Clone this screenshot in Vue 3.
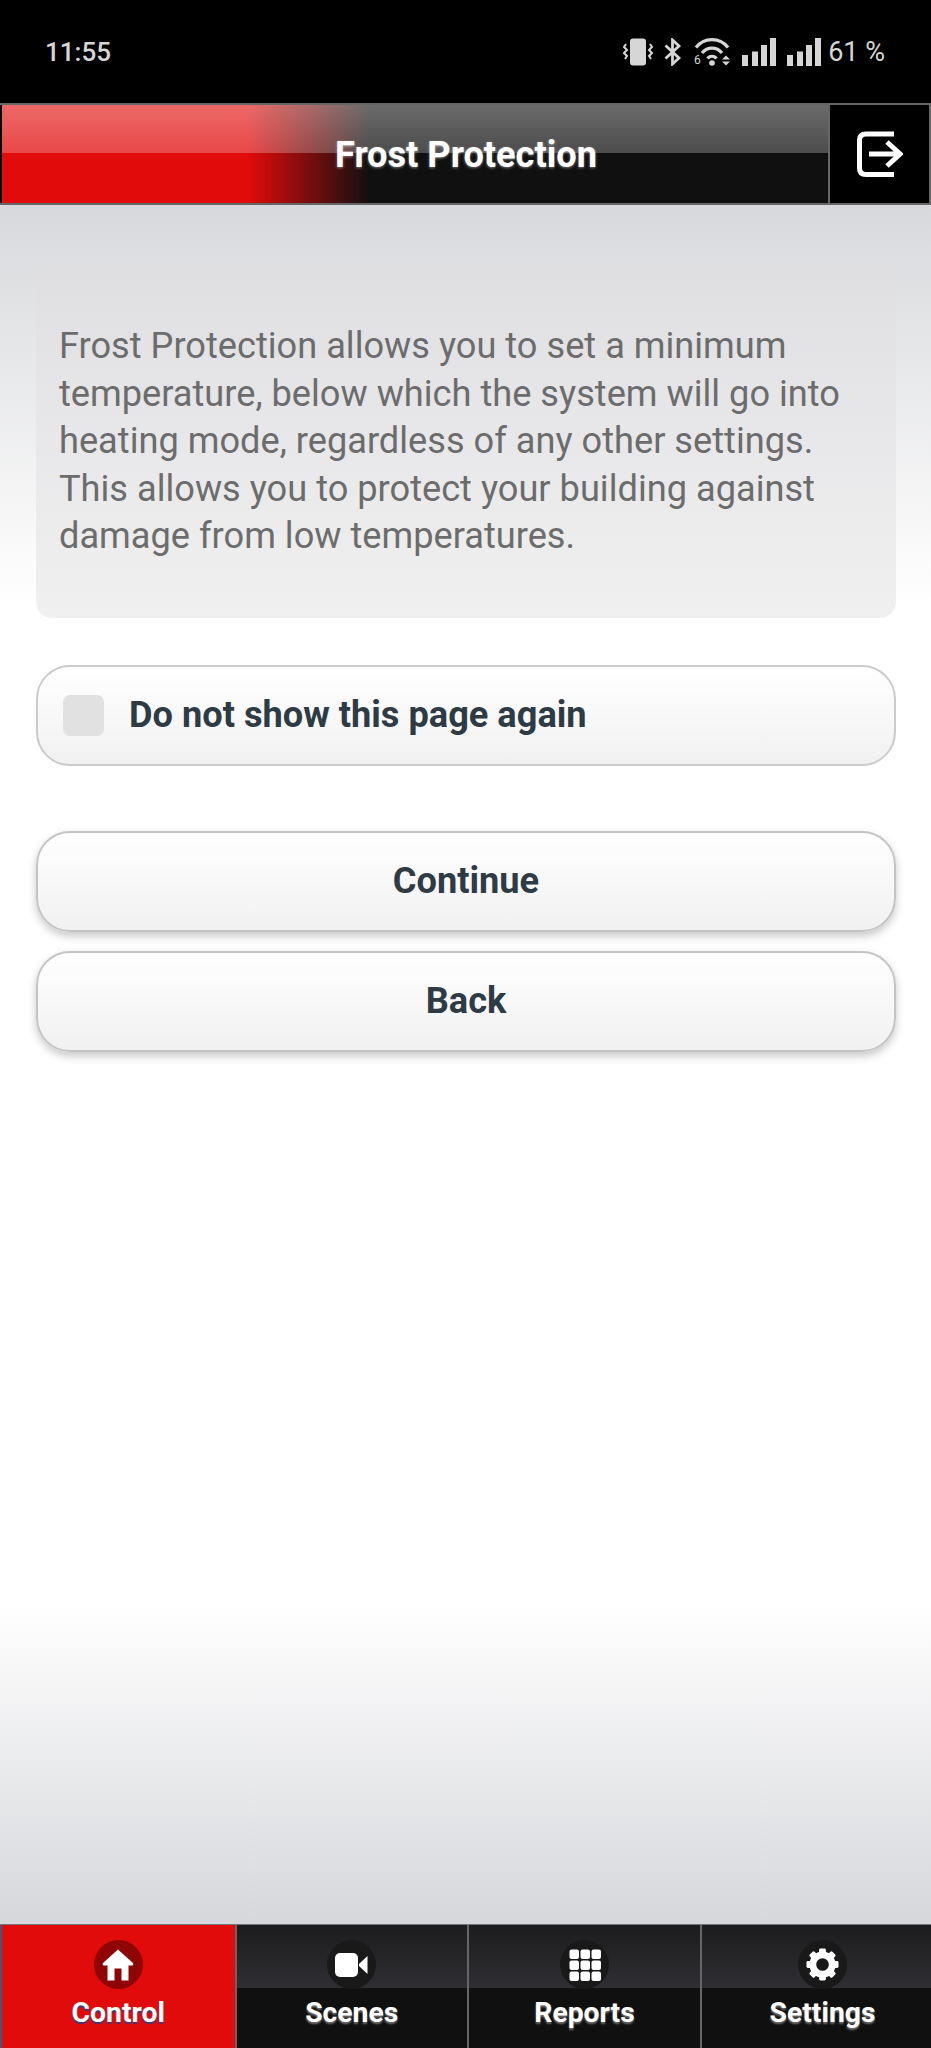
<script setup>
const lines = [
  'Frost Protection allows you to set a minimum',
  'temperature, below which the system will go into',
  'heating mode, regardless of any other settings.',
  'This allows you to protect your building against',
  'damage from low temperatures.'
]

const tabs = [
  { name: 'Control', icon: 'home', active: true },
  { name: 'Scenes', icon: 'video' },
  { name: 'Reports', icon: 'grid' },
  { name: 'Settings', icon: 'gear' }
]

const gridCells = []
for (let r = 0; r < 3; r++) {
  for (let c = 0; c < 3; c++) {
    gridCells.push({ x: 0.5 + c * 11, y: 0.5 + r * 11 })
  }
}

const gearTeeth = [0, 45, 90, 135, 180, 225, 270, 315]
</script>

<template>
  <div class="screen">
    <div class="status">
      <span class="time">11:55</span>
      <div class="status-icons">
        <svg width="30" height="28" viewBox="0 0 30 28">
          <rect x="7" y="0.5" width="16" height="27" rx="3" fill="#d6d6d6" />
          <path d="M3 6 L1 9 L4 12 L1 15 L4 18 L2 21 M27 6 L29 9 L26 12 L29 15 L26 18 L28 21" fill="none" stroke="#d6d6d6" stroke-width="2" />
        </svg>
        <svg width="18" height="28" viewBox="0 0 18 28">
          <path d="M1.5 7.5 L15 20 L8.5 26 V2 L15 8 L1.5 20.5" fill="none" stroke="#d6d6d6" stroke-width="2.8" />
        </svg>
        <svg width="36" height="32" viewBox="0 -2 36 32">
          <path d="M2 9.5 C10 -1 26 -1 34 9.500 M8 15 C13.5 8.5 22.5 8.5 28 15 M13.500 20.500 C15.5 17.5 20.5 17.5 22.500 20.500" fill="none" stroke="#d6d6d6" stroke-width="3.2" />
          <circle cx="18" cy="25" r="2.8" fill="#d6d6d6" />
          <path d="M28 21.500 L32 17.500 L36 21.500 Z M28 23.500 H36 L32 27.500 Z" fill="#d6d6d6" />
          <text x="0" y="26" class="wifi-six">6</text>
        </svg>
        <svg v-for="n in 2" :key="n" width="35" height="28" viewBox="0 0 35 28">
          <rect x="0" y="17" width="6" height="11" fill="#d6d6d6" />
          <rect x="10" y="13.500" width="6" height="14.500" fill="#d6d6d6" />
          <rect x="19" y="7" width="6" height="21" fill="#d6d6d6" />
          <rect x="28" y="0" width="6" height="28" fill="#d6d6d6" />
        </svg>
        <span class="battery">61 %</span>
      </div>
    </div>

    <header class="header">
      <div class="title-bar">
        <h1>Frost Protection</h1>
      </div>
      <button class="exit" type="button">
        <svg width="46" height="46" viewBox="0 0 46 46">
          <path d="M37 3 H9 Q2.500 3 2.500 9 V37 Q2.500 43.500 9 43.500 H37" fill="none" stroke="#fff" stroke-width="5" />
          <path d="M12 23 H43 M30 11 L43 23 L30 35" fill="none" stroke="#fff" stroke-width="5" />
        </svg>
      </button>
    </header>

    <main class="content">
      <section class="info">
        <p v-for="line in lines" :key="line">{{ line }}</p>
      </section>

      <label class="check-row">
        <span class="box"></span>
        <span>Do not show this page again</span>
      </label>

      <div class="actions">
        <button class="btn" type="button">Continue</button>
        <button class="btn" type="button">Back</button>
      </div>
    </main>

    <nav class="tabs">
      <div v-for="tab in tabs" :key="tab.name" class="tab" :class="{ active: tab.active }">
        <span class="disc">
          <svg v-if="tab.icon === 'home'" width="32" height="32" viewBox="0 0 32 32">
            <path d="M16 0.500 L31 14 Q32 16 30 16.500 H26.500 V31.500 H19.500 V19.500 H12.500 V31.500 H5.500 V16.500 H2 Q0 16 1 14 Z" fill="#fff" />
          </svg>
          <svg v-else-if="tab.icon === 'video'" width="33" height="24" viewBox="0 0 33 24">
            <rect x="0" y="0" width="23" height="24" rx="5" fill="#fff" />
            <path d="M24 11 L32.500 3 V21 L24 13 Z" fill="#fff" />
          </svg>
          <svg v-else-if="tab.icon === 'grid'" width="32" height="32" viewBox="0 0 32 32">
            <rect v-for="(c, i) in gridCells" :key="i" :x="c.x" :y="c.y" width="9.500" height="9.500" rx="2" fill="#fff" />
          </svg>
          <svg v-else width="33" height="33" viewBox="0 0 34 34">
            <rect v-for="deg in gearTeeth" :key="deg" x="13.500" y="0.500" width="7" height="8" rx="1.500" fill="#fff" :transform="`rotate(${deg} 17 17)`" />
            <circle cx="17" cy="17" r="10" fill="none" stroke="#fff" stroke-width="7" />
          </svg>
        </span>
        <span class="tab-label">{{ tab.name }}</span>
      </div>
    </nav>
  </div>
</template>

<style>
body {
  margin: 0;
  background: #fff;
}
</style>

<style scoped>
.screen {
  width: 931px;
  height: 2048px;
  display: flex;
  flex-direction: column;
  overflow: hidden;
  font-family: Roboto, "Liberation Sans", sans-serif;
}

.status {
  height: 103px;
  flex: none;
  background: #000;
  color: #d6d6d6;
  display: flex;
  align-items: center;
  justify-content: space-between;
  padding: 0 46px 0 45px;
  box-sizing: border-box;
}

.time {
  font-size: 26px;
  font-weight: 500;
}

.status-icons {
  display: flex;
  align-items: center;
}

.status-icons svg {
  margin-right: 10px;
}

.status-icons svg:nth-child(1) {
  margin-right: 11px;
}

.status-icons svg:nth-child(2),
.status-icons svg:nth-child(3) {
  margin-right: 12px;
}

.status-icons svg:nth-child(5) {
  margin-right: 6px;
}

.wifi-six {
  font-family: Roboto, sans-serif;
  font-size: 12px;
  fill: #d6d6d6;
}

.battery {
  font-size: 27px;
  font-weight: 400;
}

.header {
  height: 102px;
  flex: none;
  display: flex;
  background: #000;
  border-top: 2px solid #666;
  border-bottom: 2px solid #666;
  box-sizing: border-box;
}

.title-bar {
  flex: 1;
  margin-left: 2px;
  padding-left: 102px;
  background:
    linear-gradient(180deg, rgba(255, 255, 255, 0.38) 0, rgba(255, 255, 255, 0.25) 48px, transparent 48px),
    linear-gradient(90deg, #e20b0b 0, #e20b0b 245px, #101010 368px);
  display: flex;
  align-items: center;
  justify-content: center;
}

.title-bar h1 {
  margin: 0;
  color: #fff;
  font-size: 36.2px;
  font-weight: 700;
  text-shadow: 0 1px 3px rgba(255, 255, 255, 0.45);
}

.exit {
  width: 103px;
  flex: none;
  background: #000;
  border: none;
  border-left: 2px solid #666;
  border-right: 2px solid #666;
  padding: 0;
  display: flex;
  align-items: center;
  justify-content: center;
}

.content {
  flex: 1;
  padding: 59px 35px 0 36px;
  display: flex;
  flex-direction: column;
  background:
    linear-gradient(180deg, #d8d9dc 0, #fff 400px, #fff 1400px, #d6d7db 1720px);
}

.info {
  box-sizing: border-box;
  height: 354px;
  padding: 58px 23px 0;
  border-radius: 16px;
  background: linear-gradient(180deg, #dfdfe1 0, #e8e8ea 50%, #f0f0f0 100%);
  color: #6c6c6c;
  font-size: 36.2px;
  line-height: 47.5px;
}

.info p {
  margin: 0;
  white-space: nowrap;
}

.check-row {
  margin-top: 47px;
  height: 101px;
  box-sizing: border-box;
  display: flex;
  align-items: center;
  gap: 25px;
  padding-left: 25px;
  border: 2px solid #cbcbcb;
  border-radius: 34px;
  background: linear-gradient(180deg, #fff 0, #f1f1f2 100%);
  color: #2e3b45;
  font-size: 36.2px;
  font-weight: 700;
}

.check-row span:last-child {
  margin-bottom: 2px;
}

.box {
  width: 41px;
  height: 41px;
  border-radius: 7px;
  background: #e1e1e1;
}

.actions {
  margin-top: 65px;
  display: flex;
  flex-direction: column;
  gap: 19px;
}

.btn {
  height: 101px;
  box-sizing: border-box;
  border: 2px solid #c4c4c4;
  border-radius: 34px;
  padding: 0 0 2px;
  background: linear-gradient(180deg, #fff 0, #f1f1f2 100%);
  box-shadow: 0 4px 8px rgba(0, 0, 0, 0.22);
  color: #2e3b45;
  font-family: inherit;
  font-size: 36.2px;
  font-weight: 700;
}

.tabs {
  height: 124px;
  flex: none;
  display: grid;
  grid-template-columns: 234.5px 232.5px 233px 243px;
  border-top: 1px solid #777;
  box-sizing: border-box;
  background:
    linear-gradient(180deg, #1c1c1e 0, #2f2f33 63px, #101010 63px);
}

.tab {
  display: flex;
  flex-direction: column;
  align-items: center;
  border-left: 2px solid #666;
  box-sizing: border-box;
}

.tab.active {
  background: #e20b0b;
  border-left-color: #44557a;
}

.disc {
  margin-top: 15px;
  width: 49px;
  height: 49px;
  border-radius: 50%;
  background: #19191a;
  display: flex;
  align-items: center;
  justify-content: center;
}

.tab.active .disc {
  background: #8f0505;
}

.disc svg {
  display: block;
}

.tab-label {
  margin-top: 7px;
  color: #fff;
  font-size: 28.3px;
  font-weight: 700;
  text-shadow: 0 2px 2px rgba(255, 255, 255, 0.4);
}

.tab.active .tab-label {
  text-shadow: 0 2px 1px rgba(20, 70, 150, 0.8);
}
</style>
